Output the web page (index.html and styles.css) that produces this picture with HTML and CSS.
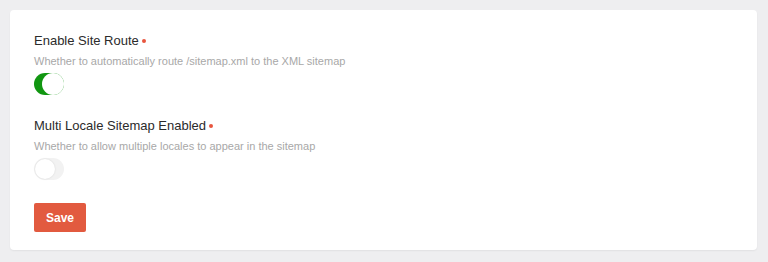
FILE: index.html
```html
<!DOCTYPE html>
<html lang="en">
<head>
    <meta charset="UTF-8">
    <title>Sitemap Settings</title>
    <link rel="stylesheet" href="styles.css">
</head>
<body>
    <div class="card">
        <div class="field">
            <div class="label">Enable Site Route<span class="required"></span></div>
            <div class="help">Whether to automatically route /sitemap.xml to the XML sitemap</div>
            <div class="toggle on"><span class="knob"></span></div>
        </div>
        <div class="field">
            <div class="label">Multi Locale Sitemap Enabled<span class="required"></span></div>
            <div class="help">Whether to allow multiple locales to appear in the sitemap</div>
            <div class="toggle"><span class="knob"></span></div>
        </div>
        <button class="btn-save">Save</button>
    </div>
</body>
</html>
```

FILE: styles.css
```css
body {
    margin: 0;
    padding: 10px 11px 12px 10px;
    background: #eeeef0;
    font-family: "Liberation Sans", Arial, sans-serif;
    color: #333;
}

.card {
    background: #fff;
    border-radius: 4px;
    box-shadow: 0 1px 2px rgba(0, 0, 0, 0.06);
    padding: 23px 24px 18px;
    height: 199px;
}

.field {
    margin-bottom: 23px;
}

.label {
    font-size: 13px;
    line-height: 16px;
    color: #2b2b2b;
    display: flex;
    align-items: center;
}

.required {
    width: 4px;
    height: 4px;
    border-radius: 50%;
    background: #e8553e;
    margin-left: 3px;
}

.help {
    font-size: 11px;
    line-height: 12px;
    color: #a8a8a8;
    margin-top: 6px;
    margin-bottom: 6px;
}

.toggle {
    position: relative;
    width: 30px;
    height: 22px;
    border-radius: 11px;
    background: #f2f2f2;
}

.toggle.on {
    background: #119611;
}

.knob {
    position: absolute;
    top: 1px;
    left: 1px;
    width: 20px;
    height: 20px;
    border-radius: 50%;
    background: #fff;
    box-shadow: 0 0 2px rgba(0, 0, 0, 0.12);
}

.toggle.on .knob {
    top: 0;
    left: 8px;
    width: 22px;
    height: 22px;
    box-shadow: none;
}

.btn-save {
    display: block;
    width: 52px;
    height: 29px;
    border: none;
    border-radius: 2px;
    background: #e25a3f;
    color: #fff;
    font-family: inherit;
    font-size: 12px;
    font-weight: bold;
    padding: 0;
}
```
